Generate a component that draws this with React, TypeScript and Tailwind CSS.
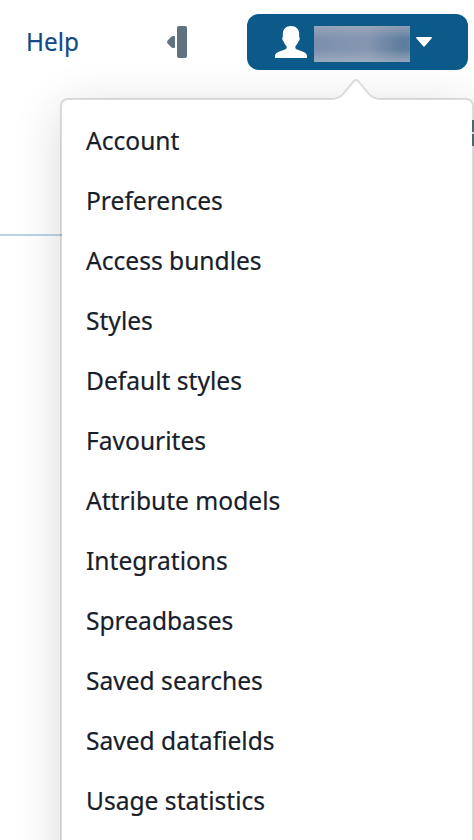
import React from 'react';

const menuItems = [
    'Account',
    'Preferences',
    'Access bundles',
    'Styles',
    'Default styles',
    'Favourites',
    'Attribute models',
    'Integrations',
    'Spreadbases',
    'Saved searches',
    'Saved datafields',
    'Usage statistics',
];

const CollapseIcon = () => (
    <svg width="22" height="32" viewBox="0 0 22 32" fill="#5f7282">
        <rect x="11" y="0" width="10" height="32" rx="2" />
        <path d="M7 10H8Q9 10 9 11V21Q9 22 8 22H7Q6 22 5 21L1.6 17.6Q.4 16 1.6 14.4L5 11Q6 10 7 10Z" />
    </svg>
);

const UserIcon = () => (
    <svg width="32" height="32" viewBox="0 0 32 32" fill="#fff">
        <path d="M16 0C21 0 24.2 3.2 24.2 8C24.2 9.5 24.1 10.5 24.2 11C25.3 12 24.7 14.5 23.4 15.5C22.7 18 21.5 19 20.4 20.2V22.3C22 25 32 24.8 32 30V32H0V30C0 24.8 10 25 11.6 22.3V20.2C10.5 19 9.3 18 8.6 15.5C7.3 14.5 6.7 12 7.8 11C7.9 10.5 7.8 9.5 7.8 8C7.8 3.2 11 0 16 0Z" />
    </svg>
);

const UserMenu = () => (
    <nav className="absolute left-[60px] top-[98px] w-[414px] h-[800px] rounded-lg border-2 border-black/[0.13] bg-white bg-clip-padding pt-2.5 shadow-[0_10px_48px_rgba(0,0,0,0.15)]">
        <svg className="absolute left-[264px] top-[-22px]" width="60" height="25" viewBox="0 0 60 25">
            <path d="M2 22C11 22 13 20 16 17L26.5 4.5Q30 0 33.5 4.5L44 17C47 20 49 22 58 22V25H2Z" fill="#fff" />
            <path d="M5 21C11.5 21 14 19.5 17 16.2L27 4Q30 .2 33 4L43 16.2C46 19.5 48.5 21 55 21" fill="none" stroke="#dcdcdc" strokeWidth="2" />
        </svg>
        <ul>
            {menuItems.map(item => (
                <li key={item} className="flex h-[60px] items-center pl-6 text-[26px] leading-none text-[#17202a]">
                    <span className="origin-left scale-x-[0.945] [-webkit-text-stroke:0.2px]">{item}</span>
                </li>
            ))}
        </ul>
    </nav>
);

export default function App() {
    return (
        <div className="relative h-[840px] w-[474px] overflow-hidden bg-white font-['Noto_Sans',sans-serif]">
            <header className="flex h-[84px] items-center pl-[26px] pr-1.5">
                <a className="w-[140px] origin-left scale-x-[0.935] pb-0.5 text-[26px] leading-none text-[#134a86] [-webkit-text-stroke:0.2px]">Help</a>
                <CollapseIcon />
                <button className="relative z-10 ml-auto flex h-14 w-[221px] items-center rounded-xl bg-[#0b5a8a] pl-7">
                    <UserIcon />
                    <span className="ml-[7px] mt-1 h-9 w-24 bg-[linear-gradient(180deg,rgba(170,180,195,0.55)_0%,transparent_35%,transparent_65%,rgba(175,187,200,0.6)_100%),radial-gradient(ellipse_36px_60px_at_90px_18px,#5d7c9d_0%,transparent_100%),linear-gradient(90deg,#7b90ae_0%,#8596b0_50%,#8093af_100%)]" />
                    <svg className="ml-1.5" width="16" height="12" viewBox="0 0 16 12" fill="#fff">
                        <path d="M1 1H15Q16.5 1.3 15.5 2.5L9 10Q8 11 7 10L.5 2.5Q-.5 1.3 1 1Z" />
                    </svg>
                </button>
            </header>
            <div className="mr-10 h-[152px] border-b-2 border-[#bcd3e7]" />
            {/* edge of the toolbar icon behind the menu */}
            <div className="absolute right-0 top-[120px] z-10 flex w-0.5 flex-col gap-0.5">
                <span className="h-3 bg-[#506475]" />
                <span className="h-3 bg-[#506475]" />
            </div>
            <UserMenu />
        </div>
    );
}
